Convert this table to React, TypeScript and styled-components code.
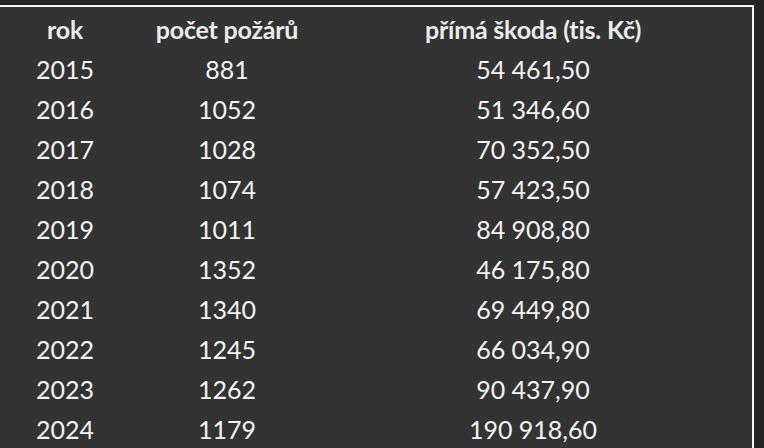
import React from "react";
import styled, { createGlobalStyle } from "styled-components";

const GlobalStyle = createGlobalStyle`
  html, body {
    margin: 0;
    padding: 0;
    background: #242424;
    overflow: hidden;
  }
`;

type Row = { year: string; fires: string; damage: string };

const rows: Row[] = [
  { year: "2015", fires: "881", damage: "54 461,50" },
  { year: "2016", fires: "1052", damage: "51 346,60" },
  { year: "2017", fires: "1028", damage: "70 352,50" },
  { year: "2018", fires: "1074", damage: "57 423,50" },
  { year: "2019", fires: "1011", damage: "84 908,80" },
  { year: "2020", fires: "1352", damage: "46 175,80" },
  { year: "2021", fires: "1340", damage: "69 449,80" },
  { year: "2022", fires: "1245", damage: "66 034,90" },
  { year: "2023", fires: "1262", damage: "90 437,90" },
  { year: "2024", fires: "1179", damage: "190 918,60" },
];

const Page = styled.div`
  width: 764px;
  height: 448px;
  padding-top: 5px;
  box-sizing: border-box;
  overflow: hidden;
`;

const Sheet = styled.div`
  width: 754px;
  height: 460px;
  box-sizing: border-box;
  background: #333333;
  border-top: 2px solid #f4f4f4;
  border-right: 2px solid #f4f4f4;
  padding-top: 2px;
`;

const Grid = styled.div`
  display: grid;
  grid-template-columns: 130px 194px 418px;
  grid-auto-rows: 40px;
  font-family: Lato, "Liberation Sans", sans-serif;
`;

const Cell = styled.div<{ $head?: boolean }>`
  display: flex;
  align-items: center;
  justify-content: center;
  color: ${({ $head }) => ($head ? "#ebebeb" : "#f4f4f4")};
  font-size: ${({ $head }) => ($head ? "25px" : "25px")};
  font-weight: ${({ $head }) => ($head ? 700 : 400)};
  letter-spacing: ${({ $head }) => ($head ? "-0.2px" : "0")};
  white-space: nowrap;
`;

export default function App() {
  return (
    <>
      <GlobalStyle />
      <Page>
        <Sheet>
          <Grid>
            <Cell $head>rok</Cell>
            <Cell $head>počet požárů</Cell>
            <Cell $head>přímá škoda (tis. Kč)</Cell>
            {rows.map((r) => (
              <React.Fragment key={r.year}>
                <Cell>{r.year}</Cell>
                <Cell>{r.fires}</Cell>
                <Cell>{r.damage}</Cell>
              </React.Fragment>
            ))}
          </Grid>
        </Sheet>
      </Page>
    </>
  );
}
